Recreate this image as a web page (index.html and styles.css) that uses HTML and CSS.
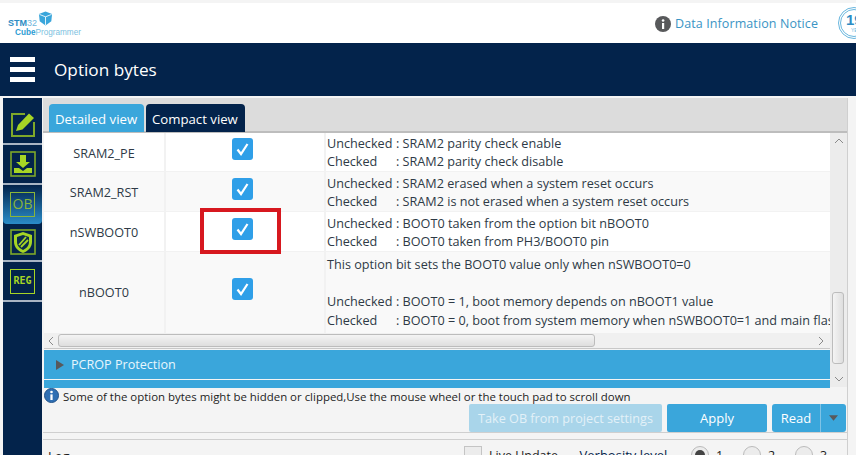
FILE: index.html
```html
<!DOCTYPE html>
<html lang="en">
<head>
<meta charset="utf-8">
<title>Option bytes</title>
<link rel="stylesheet" href="styles.css">
</head>
<body>
<div class="app">
  <header class="brandbar">
    <div class="logo">
      <div class="logo-top"><span class="logo-stm">STM</span><span class="logo-32">32</span>
        <svg class="cube" viewBox="0 0 16 16"><path d="M8 0.5 15 3.2 14.2 11 8 15.5 1.8 11 1 3.2Z" fill="#3aa6db"/><path d="M1.5 3.6 8 6.2 14.5 3.6M8 6.2V15" fill="none" stroke="#fff" stroke-width=".9"/></svg>
      </div>
      <div class="logo-bottom"><b>Cube</b>Programmer</div>
    </div>
    <div class="notice">
      <svg class="notice-icon" viewBox="0 0 16 16"><circle cx="8" cy="8" r="8" fill="#58595b"/><rect x="7" y="7" width="2.2" height="6" fill="#fff"/><circle cx="8.1" cy="4.5" r="1.3" fill="#fff"/></svg>
      <span>Data Information Notice</span>
    </div>
    <div class="seal"><span class="seal-num">19</span><span class="seal-sub">YEARS</span></div>
  </header>
  <div class="titlebar">
    <div class="burger"><i></i><i></i><i></i></div>
    <h1>Option bytes</h1>
  </div>
  <div class="main">
    <nav class="side">
      <div class="side-item first">
        <svg class="ico" viewBox="0 0 26 26"><path d="M15 3H2V25H24V11" fill="none" stroke="#7fa829" stroke-width="2"/><path d="M6 20 8 14 19 2.5 24 7 12.5 18.5Z" fill="#a6d525"/></svg>
      </div>
      <div class="side-item">
        <svg class="ico" viewBox="0 0 26 26"><rect x="1" y="1" width="24" height="24" fill="none" stroke="#7fa829" stroke-width="1.6"/><path d="M10 4H16V11H20L13 17 6 11H10Z" fill="#a6d525"/><path d="M4 17H9L13 20 17 17H22V22H4Z" fill="#a6d525"/></svg>
      </div>
      <div class="side-item active">
        <div class="ob">OB</div>
      </div>
      <div class="side-item shieldrow">
        <svg class="ico" viewBox="0 0 26 26"><rect x="1" y="1" width="24" height="24" fill="none" stroke="#7fa829" stroke-width="1.6"/><path d="M13 3 22 6V13C22 18 18 22 13 24 8 22 4 18 4 13V6Z" fill="#a6d525"/><path d="M13 6 19 8V13C19 16.5 16.500 19.500 13 21 9.500 19.500 7 16.500 7 13V8Z" fill="#0b2d4a"/><path d="M9 16 16 8M11 18 18 11" stroke="#a6d525" stroke-width="1.8"/></svg>
      </div>
      <div class="side-item">
        <div class="reg">REG</div>
      </div>
    </nav>
    <section class="content">
      <div class="tabs">
        <div class="tab on">Detailed view</div>
        <div class="tab">Compact view</div>
      </div>
      <div class="panel">
        <div class="table-wrap">
          <div class="rows">
            <div class="row">
              <div class="c-name">SRAM2_PE</div>
              <div class="c-check"><span class="check"><svg viewBox="0 0 21 22"><path d="M5.500 11.500 9 16 15.500 6" fill="none" stroke="#fff" stroke-width="2.200"/></svg></span></div>
              <div class="c-desc"><div class="kv"><span class="k">Unchecked</span>: SRAM2 parity check enable</div><div class="kv"><span class="k">Checked</span>: SRAM2 parity check disable</div></div>
            </div>
            <div class="row alt">
              <div class="c-name">SRAM2_RST</div>
              <div class="c-check"><span class="check"><svg viewBox="0 0 21 22"><path d="M5.500 11.500 9 16 15.500 6" fill="none" stroke="#fff" stroke-width="2.200"/></svg></span></div>
              <div class="c-desc"><div class="kv"><span class="k">Unchecked</span>: SRAM2 erased when a system reset occurs</div><div class="kv"><span class="k">Checked</span>: SRAM2 is not erased when a system reset occurs</div></div>
            </div>
            <div class="row">
              <div class="c-name">nSWBOOT0</div>
              <div class="c-check"><span class="check"><svg viewBox="0 0 21 22"><path d="M5.500 11.500 9 16 15.500 6" fill="none" stroke="#fff" stroke-width="2.200"/></svg></span><span class="mark"></span></div>
              <div class="c-desc"><div class="kv"><span class="k">Unchecked</span>: BOOT0 taken from the option bit nBOOT0</div><div class="kv"><span class="k">Checked</span>: BOOT0 taken from PH3/BOOT0 pin</div></div>
            </div>
            <div class="row alt tall">
              <div class="c-name">nBOOT0</div>
              <div class="c-check"><span class="check"><svg viewBox="0 0 21 22"><path d="M5.500 11.500 9 16 15.500 6" fill="none" stroke="#fff" stroke-width="2.200"/></svg></span></div>
              <div class="c-desc"><div class="kv">This option bit sets the BOOT0 value only when nSWBOOT0=0</div><div class="kv">&nbsp;</div><div class="kv"><span class="k">Unchecked</span>: BOOT0 = 1, boot memory depends on nBOOT1 value</div><div class="kv"><span class="k">Checked</span>: BOOT0 = 0, boot from system memory when nSWBOOT0=1 and main flash is empty</div></div>
            </div>
          </div>
          <div class="hscroll">
            <svg class="arrow" viewBox="0 0 8 10"><path d="M6 1 2 5 6 9" fill="none" stroke="#8a8a8a"/></svg>
            <div class="htrack"><div class="hthumb"></div></div>
            <svg class="arrow" viewBox="0 0 8 10"><path d="M2 1 6 5 2 9" fill="none" stroke="#8a8a8a"/></svg>
          </div>
          <div class="band">
            <svg class="tri" viewBox="0 0 8 10"><path d="M0 0 8 5 0 10Z" fill="#58595b"/></svg>
            <span>PCROP Protection</span>
          </div>
          <div class="band2"></div>
        </div>
        <div class="vscroll">
          <svg class="arrow-v" viewBox="0 0 10 8"><path d="M1 6 5 2 9 6" fill="none" stroke="#8a8a8a"/></svg>
          <div class="vtrack"><div class="vthumb"></div></div>
          <svg class="arrow-v" viewBox="0 0 10 8"><path d="M1 2 5 6 9 2" fill="none" stroke="#8a8a8a"/></svg>
        </div>
      </div>
      <div class="hint">
        <svg class="hint-icon" viewBox="0 0 16 16"><circle cx="8" cy="8" r="7.500" fill="#2f6fb3" stroke="#1c4e86"/><rect x="6.800" y="6.800" width="2.400" height="6" fill="#fff"/><circle cx="8" cy="4.300" r="1.400" fill="#fff"/></svg>
        <span>Some of the option bytes might be hidden or clipped,Use the mouse wheel or the touch pad to scroll down</span>
      </div>
      <div class="actions">
        <button class="btn take">Take OB from project settings</button>
        <button class="btn apply">Apply</button>
        <div class="split"><button class="btn read">Read</button><button class="btn caret"><svg viewBox="0 0 10 6"><path d="M0 0H10L5 6Z" fill="#58595b"/></svg></button></div>
      </div>
      <div class="divider"></div>
      <div class="log">
        <span class="log-title">Log</span>
        <span class="box"></span><span class="live">Live Update</span>
        <span class="verb">Verbosity level</span>
        <span class="radio sel"></span><span class="rlab">1</span>
        <span class="radio"></span><span class="rlab">2</span>
        <span class="radio"></span><span class="rlab">3</span>
      </div>
    </section>
  </div>
</div>
</body>
</html>
```
FILE: styles.css
```css
* { box-sizing: border-box; }
html, body { margin: 0; height: 100%; overflow: hidden; }
body { font-family: "Open Sans", "Noto Sans", sans-serif; background: #f4f4f4; color: #2e3a46; }
.app { height: 455px; padding-top: 3px; display: flex; flex-direction: column; overflow: hidden; }

.brandbar { height: 40px; flex: none; background: #fff; display: flex; align-items: center; position: relative; overflow: hidden; }
.logo { width: 655px; padding-left: 8px; font-family: "Liberation Sans", sans-serif; color: #3aa6db; line-height: 9px; margin-top: 4px; }
.logo-top { display: flex; align-items: flex-end; font-size: 9px; height: 14px; }
.logo-stm { font-weight: bold; color: #2d8cc4; }
.logo-32 { color: #6fb6dc; }
.cube { width: 15px; height: 15px; margin: 0 0 2px 1px; }
.logo-bottom { font-size: 8.200px; padding-left: 7px; color: #7cbfe0; }
.logo-bottom b { color: #2d9cd3; }
.notice { display: flex; align-items: center; gap: 4px; font-size: 12.500px; color: #3a94c4; letter-spacing: .1px; margin-top: 1px; }
.notice-icon { width: 16px; height: 16px; flex: none; }
.seal { position: absolute; left: 838px; top: 4px; width: 32px; height: 32px; border-radius: 50%; border: 3px double #68b6de; display: flex; flex-direction: column; padding: 2px 0 0 5px; }
.seal-num { font-size: 15px; line-height: 15px; font-weight: bold; color: #2d8cc4; font-family: "Liberation Sans", sans-serif; }
.seal-sub { font-size: 5px; line-height: 6px; color: #68b6de; font-family: "Liberation Sans", sans-serif; padding-left: 5px; }

.titlebar { height: 53px; flex: none; background: #03234b; display: flex; align-items: center; color: #fff; }
.burger { width: 25px; margin-left: 10px; display: flex; flex-direction: column; gap: 5px; }
.burger i { display: block; height: 5px; background: #fff; }
h1 { margin: 0 0 1px 19px; font-size: 17.200px; font-weight: 400; }

.main { flex: 1; display: flex; padding: 2px 0 0 3px; min-height: 0; }
.side { width: 39px; flex: none; background: #03234b; display: flex; flex-direction: column; margin-right: 1px; }
.side-item { height: 40px; display: flex; align-items: center; justify-content: center; border-bottom: 2px solid #a9b5c4; }
.side-item.first { height: 47px; padding-top: 7px; }
.side-item.active { height: 39px; border-bottom: 0; border-radius: 0 0 4px 4px; background: linear-gradient(#03234b, #2a8cc8); }
.side-item.shieldrow { height: 38px; }
.ico { width: 26px; height: 26px; }
.ob { width: 25px; height: 25px; border: 1.500px solid #8ab53a; color: #8ab53a; font-size: 14px; line-height: 22px; text-align: center; }
.reg { width: 25px; height: 25px; border: 1.500px solid #a6d525; color: #a6d525; font-size: 10px; font-weight: 800; line-height: 22px; text-align: center; font-family: "DejaVu Sans Mono", monospace; }

.content { flex: 1; min-width: 0; display: flex; flex-direction: column; margin-right: 8px; border-right: 1px solid #cfcfcf; }
.tabs { height: 35px; flex: none; background: #dcdcdc; border-bottom: 2px solid #bdbdbd; display: flex; align-items: flex-end; gap: 2px; padding-left: 6px; }
.tab { height: 28px; margin-bottom: -1px; padding: 2px 6px 0; line-height: 27px; background: #03234b; color: #fff; border-radius: 4px 4px 0 0; font-size: 13.200px; width: 99px; white-space: nowrap; overflow: hidden; }
.tab.on { background: #3aa6db; width: 95px; }

.panel { height: 254px; flex: none; display: flex; }
.table-wrap { width: 787px; flex: none; display: flex; flex-direction: column; padding-left: 1px; }
.rows { height: 200px; flex: none; overflow: hidden; background: #f2f2f2; }
.row { display: flex; height: 39px; margin-bottom: 1px; background: #fff; font-size: 12.650px; }
.row.alt { background: #f9f9f9; }
.row.tall { height: 81px; }
.row:first-child { height: 38px; }
.c-name { width: 120px; flex: none; display: flex; align-items: center; justify-content: center; padding-top: 1px; }
.row.tall .c-name { padding-bottom: 1px; padding-top: 0; }
.c-check { width: 162px; flex: none; display: flex; align-items: center; justify-content: center; border-left: 2px solid #f2f2f2; border-right: 2px solid #f2f2f2; position: relative; padding: 0 5px 6px 0; }
.row.tall .c-check { padding-bottom: 8px; }
.c-desc { flex: none; white-space: nowrap; padding-left: 1px; line-height: 18px; }
.row:nth-child(1) .c-desc { padding-top: 1px; }
.row:nth-child(2) .c-desc, .row:nth-child(3) .c-desc { padding-top: 2px; }
.row.tall .c-desc { padding-top: 3px; line-height: 18.700px; }
.k { display: inline-block; width: 69px; }
.check { width: 21px; height: 22px; border-radius: 3px; background: #2f9fe8; display: block; }
.check svg { display: block; width: 21px; height: 22px; }
.mark { position: absolute; left: 34px; top: -4px; width: 81px; height: 46px; border: 4px solid #d7181f; }

.hscroll { height: 16px; flex: none; display: flex; align-items: center; background: #f0f0f0; border-bottom: 1px solid #c8c8c8; padding: 0 2px 0 0; }
.arrow { width: 8px; height: 10px; flex: none; margin: 0 3px; }
.htrack { flex: 1; height: 13px; }
.hthumb { width: 537px; height: 13px; background: linear-gradient(#f4f4f4, #dedede); border: 1px solid #bcbcbc; border-radius: 3px; }
.band { height: 29px; flex: none; background: #3aa6db; margin-top: 1px; color: #e8f6fd; font-size: 12.600px; display: flex; align-items: center; padding: 0 0 0 12px; gap: 7px; }
.tri { width: 8px; height: 10px; }
.band2 { height: 8px; margin-top: 1px; flex: none; background: #3aa6db; }

.vscroll { width: 17px; flex: none; background: #ececec; display: flex; flex-direction: column; align-items: center; }
.arrow-v { width: 10px; height: 8px; margin: 4px 0; flex: none; }
.vtrack { flex: 1; width: 100%; padding: 143px 0 0 2px; }
.vthumb { width: 12px; height: 72px; background: linear-gradient(90deg, #f4f4f4, #dedede); border: 1px solid #bcbcbc; border-radius: 3px; }

.hint { height: 17px; flex: none; display: flex; align-items: center; gap: 4px; font-size: 11.450px; color: #1d1d1d; white-space: nowrap; padding: 1px 0 0 1px; }
.hint-icon { width: 15px; height: 15px; flex: none; margin-top: -1px; }
.actions { height: 28px; flex: none; display: flex; justify-content: flex-end; gap: 5px; margin-right: 1px; }
.btn { border: 0; height: 28px; padding: 0; font: inherit; font-size: 13px; color: #fff; background: #3aa6db; border-radius: 2px; }
.take { width: 193px; background: #a9d5ea; color: #e3f1f8; font-size: 12.650px; }
.apply { width: 100px; }
.split { display: flex; width: 74px; }
.read { width: 48px; border-radius: 3px 0 0 3px; }
.caret { width: 26px; border-left: 1px solid #7fc3e6; border-radius: 0 3px 3px 0; display: flex; align-items: center; justify-content: center; }
.caret svg { width: 9px; height: 6px; }
.divider { height: 8px; flex: none; border-top: 1px solid #cfcfcf; border-bottom: 1px solid #cfcfcf; }
.log { flex: 1; font-size: 12.500px; color: #1d1d1d; min-height: 0; display: flex; align-items: flex-start; padding: 6px 0 0 5px; white-space: nowrap; }
.log-title { width: 418px; font-size: 13px; padding-top: 1px; }
.box { width: 18px; height: 18px; background: #ececec; border: 1px solid #c4c4c4; flex: none; }
.live { margin-left: 7px; width: 91px; padding-top: 1px; }
.verb { color: #03234b; font-size: 13px; width: 112px; }
.radio { width: 18px; height: 18px; border-radius: 50%; border: 1px solid #bbb; background: #ececec; flex: none; margin-right: 7px; position: relative; }
.radio.sel::after { content: ""; position: absolute; left: 3px; top: 3px; width: 10px; height: 10px; border-radius: 50%; background: #444; }
.rlab { width: 27px; flex: none; padding-top: 1px; }
```
